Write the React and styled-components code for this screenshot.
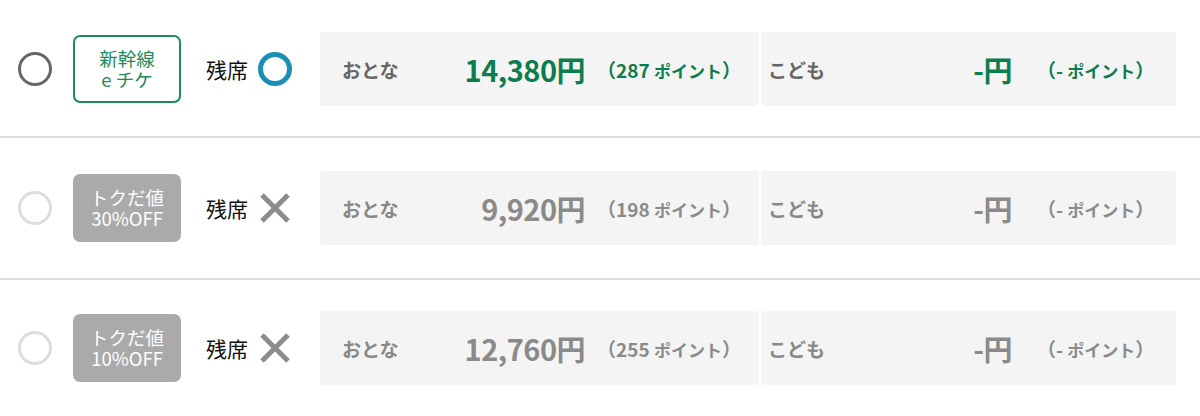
import React from "react";
import styled, { createGlobalStyle } from "styled-components";

const Global = createGlobalStyle`
  html, body { margin: 0; padding: 0; background: #fff; }
  body { font-family: "Noto Sans CJK JP", "Noto Sans", sans-serif; }
`;

const List = styled.div`
  width: 1200px;
  display: flex;
  flex-direction: column;
`;

const Row = styled.div`
  height: ${(p) => p.$h}px;
  padding-top: ${(p) => p.$pt || 0}px;
  box-sizing: border-box;
  display: flex;
  align-items: center;
  padding-left: 18px;
  border-bottom: ${(p) => (p.$last ? "none" : "2px solid #dcdcdc")};
`;

const Radio = styled.div`
  width: 34px;
  height: 34px;
  box-sizing: border-box;
  border-radius: 50%;
  border: 3px solid ${(p) => (p.$active ? "#666" : "#dddddd")};
  flex: none;
`;

const Badge = styled.div`
  margin-left: 21px;
  width: 108px;
  height: 68px;
  box-sizing: border-box;
  border-radius: 7px;
  display: flex;
  flex-direction: column;
  align-items: center;
  justify-content: center;
  font-size: 18.5px;
  line-height: 21px;
  flex: none;
  ${(p) =>
    p.$green
      ? "border: 2px solid #1b8a5c; color: #1b8a5c; background: #fff;"
      : "border: none; background: #aaaaaa; color: #fff;"}
`;

const BadgeLine = styled.div`
  white-space: nowrap;
`;

const Seat = styled.div`
  margin-left: 25px;
  width: 89px;
  display: flex;
  align-items: center;
  gap: 9px;
  font-size: 21px;
  color: #111;
  flex: none;
`;

const Panels = styled.div`
  margin-left: 25px;
  display: flex;
  gap: 2px;
`;

const Panel = styled.div`
  width: ${(p) => p.$w}px;
  height: 74px;
  box-sizing: border-box;
  background: #f4f4f4;
  border-radius: 4px;
  display: flex;
  align-items: center;
  padding-left: ${(p) => p.$pl}px;
`;

const Label = styled.div`
  width: 100px;
  font-size: 19px;
  font-weight: 700;
  color: ${(p) => (p.$active ? "#666" : "#888")};
`;

const Price = styled.div`
  width: ${(p) => p.$w}px;
  text-align: right;
  font-size: 29px;
  font-weight: 700;
  letter-spacing: -0.5px;
  color: ${(p) => (p.$active ? "#0d7d4d" : "#8a8a8a")};
`;

const Points = styled.div`
  margin-left: ${(p) => p.$ml}px;
  font-size: 19px;
  font-weight: 700;
  color: ${(p) => (p.$active ? "#0d7d4d" : "#8a8a8a")};
  white-space: nowrap;
`;

const Small = styled.span`
  font-size: 17px;
`;

const CircleIcon = () => (
  <svg width="36" height="36" viewBox="0 0 36 36">
    <circle cx="18" cy="18" r="14.5" fill="none" stroke="#1a8fb5" strokeWidth="5" />
  </svg>
);

const CrossIcon = () => (
  <svg width="36" height="36" viewBox="0 0 36 36">
    <path d="M5 5 L31 31 M31 5 L5 31" stroke="#8c8c8c" strokeWidth="5" />
  </svg>
);

const rows = [
  { active: true, badge: ["新幹線", "e チケ"], price: "14,380円", pts: "287" },
  { active: false, badge: ["トクだ値", "30%OFF"], price: "9,920円", pts: "198" },
  { active: false, badge: ["トクだ値", "10%OFF"], price: "12,760円", pts: "255" },
];

const heights = [138, 142, 136];

export default function App() {
  return (
    <>
      <Global />
      <List>
        {rows.map((r, i) => (
          <Row key={i} $h={heights[i]} $pt={i === 0 ? 2 : 0} $last={i === 2}>
            <Radio $active={r.active} />
            <Badge $green={r.active}>
              <BadgeLine>{r.badge[0]}</BadgeLine>
              <BadgeLine>{r.badge[1]}</BadgeLine>
            </Badge>
            <Seat>
              残席
              {r.active ? <CircleIcon /> : <CrossIcon />}
            </Seat>
            <Panels>
              <Panel $w={439} $pl={22}>
                <Label $active={r.active}>おとな</Label>
                <Price $w={143} $active={r.active}>{r.price}</Price>
                <Points $ml={12} $active={r.active}>
                  （{r.pts} <Small>ポイント</Small>）
                </Points>
              </Panel>
              <Panel $w={415} $pl={7}>
                <Label $active={r.active}>こども</Label>
                <Price $w={144} $active={r.active}>-円</Price>
                <Points $ml={25} $active={r.active}>
                  （- <Small>ポイント</Small>）
                </Points>
              </Panel>
            </Panels>
          </Row>
        ))}
      </List>
    </>
  );
}
